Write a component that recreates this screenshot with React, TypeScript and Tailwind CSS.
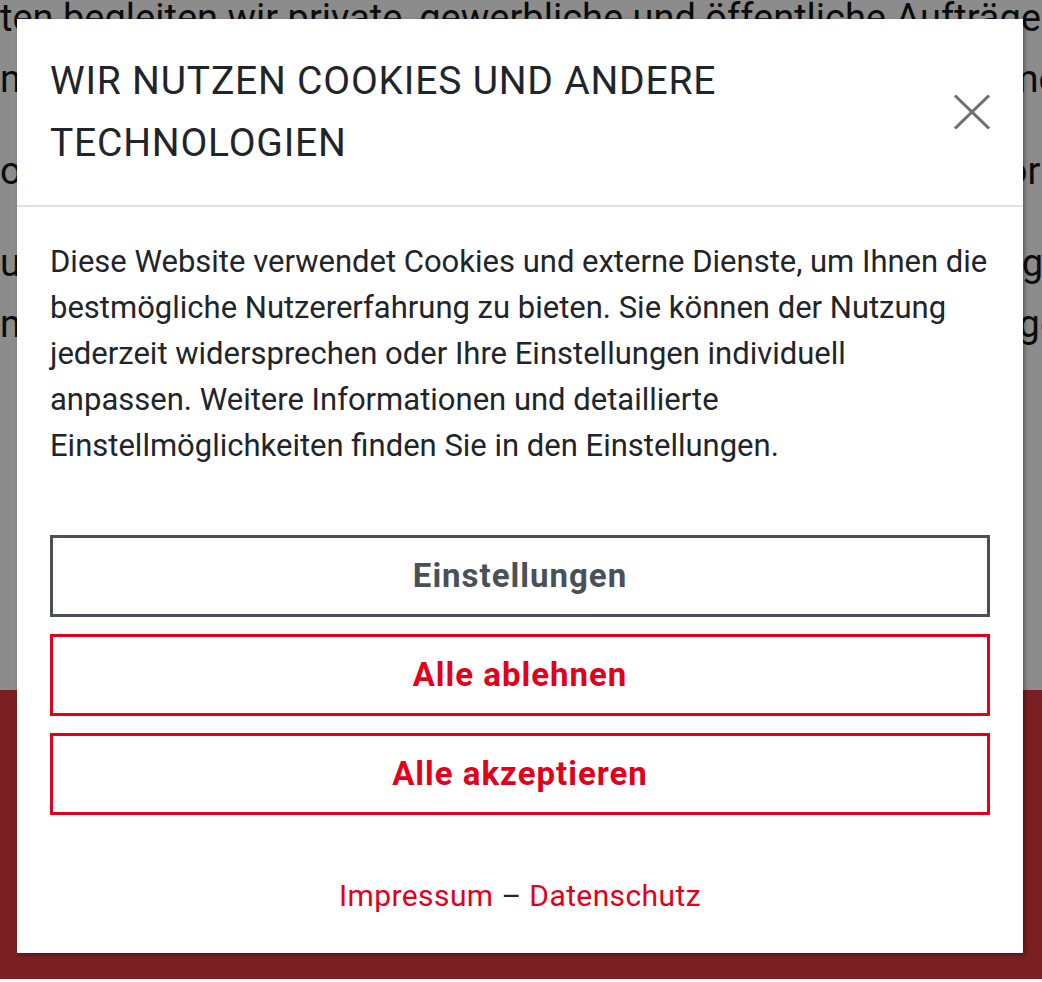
export default function App() {
  return (
    <div className="relative h-[982px] w-full overflow-hidden bg-white font-['Roboto',sans-serif]">
      {/* page behind the dialog */}
      <div className="flex h-[979px] flex-col">
        <div className="flex flex-1 flex-col whitespace-nowrap text-[38px] leading-[61px] text-[#161616]">
          <div className="-mt-[12px]">ten begleiten wir private, gewerbliche und öffentliche Aufträge</div>
          <div>nachhaltig und zuverlässig – von der Planung bis zur Abnahme st</div>
          <div className="mt-[31px]">oder Ausführung, stets mit persönlichem Ansprechpartner vor Ort in</div>
          <div className="mt-[31px]">und Sanierung von Gebäuden aller Art, mit Erfahrung und Sorgfalt hen</div>
          <div>ng und Beratung rund um Ihr Projekt, fachgerecht und termingerecht di</div>
        </div>
        <div className="h-[289px] bg-[#e03a40]" />
      </div>
      <div className="absolute inset-x-0 top-0 h-[979px] bg-black/[0.45]" />

      {/* cookie dialog */}
      <div className="absolute inset-0 flex justify-start pl-[17px] pt-[19px]">
        <div className="h-[934px] w-[1006px] bg-white shadow-[2px_2px_4px_rgba(0,0,0,0.35)]">
          <div className="flex items-center justify-between gap-6 border-b-2 border-[#dee2e6] px-[33px] py-[31px]">
            <h2 className="text-[39px] font-normal uppercase leading-[62px] tracking-[0.8px] text-[#212529]">
              Wir nutzen Cookies und andere Technologien
            </h2>
            <button className="shrink-0 text-[#6f7173]" aria-label="Schließen">
              <svg width="36" height="34" viewBox="0 0 36 34" fill="none" stroke="currentColor" strokeWidth="3" strokeLinecap="square">
                <path d="M2 1.5 34 32.5" />
                <path d="M34 1.5 2 32.5" />
              </svg>
            </button>
          </div>

          <div className="px-[33px] pt-[32px]">
            <p className="whitespace-nowrap text-[31px] leading-[46px] text-[#212529]">
              Diese Website verwendet Cookies und externe Dienste, um Ihnen die
              <br />
              bestmögliche Nutzererfahrung zu bieten. Sie können der Nutzung
              <br />
              jederzeit widersprechen oder Ihre Einstellungen individuell
              <br />
              anpassen. Weitere Informationen und detaillierte
              <br />
              Einstellmöglichkeiten finden Sie in den Einstellungen.
            </p>

            <div className="mt-[66px] flex flex-col gap-[17px]">
              <button className="h-[82px] border-[3px] border-[#495057] text-[33px] font-bold tracking-[1px] text-[#495057]">
                Einstellungen
              </button>
              <button className="h-[82px] border-[3px] border-[#e2001a] text-[33px] font-bold tracking-[1px] text-[#e2001a]">
                Alle ablehnen
              </button>
              <button className="h-[82px] border-[3px] border-[#e2001a] text-[33px] font-bold tracking-[1px] text-[#e2001a]">
                Alle akzeptieren
              </button>
            </div>

            <div className="mt-[58px] text-center text-[30px] leading-[45px] tracking-[0.4px] text-[#212529]">
              <a className="text-[#e2001a]">Impressum</a> – <a className="text-[#e2001a]">Datenschutz</a>
            </div>
          </div>
        </div>
      </div>
    </div>
  )
}
